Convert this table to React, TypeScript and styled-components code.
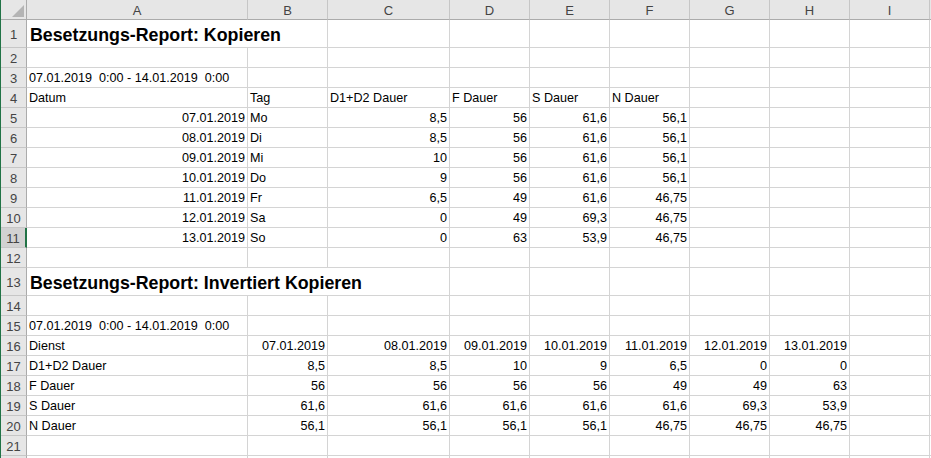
import { FC } from 'react'
import styled, { createGlobalStyle } from 'styled-components'

const GlobalStyle = createGlobalStyle`
  body {
    margin: 0;
    background: #fff;
    overflow: hidden;
  }
`

const COL_WIDTHS = [221, 80, 122, 80, 80, 80, 80, 80, 80]
const LETTERS = ['A', 'B', 'C', 'D', 'E', 'F', 'G', 'H', 'I']
const GRID = '#d4d4d4'
const EXCEL_GREEN = '#217346'

type CellData = { text?: string; right?: boolean; span?: number }
type RowData = { tall?: boolean; title?: boolean; hideNumber?: boolean; cells: CellData[] }

const Sheet = styled.div`
  display: grid;
  grid-template-columns: 26px ${COL_WIDTHS.map((w) => `${w}px`).join(' ')} 1fr;
  grid-auto-rows: 20px;
  width: 931px;
  height: 458px;
  overflow: hidden;
  border-left: 1px solid ${EXCEL_GREEN};
  box-sizing: border-box;
  font-family: 'Liberation Sans', Arial, sans-serif;
`

const HeaderBase = styled.div`
  box-sizing: border-box;
  background: #e6e6e6;
  color: #444;
  font-size: 13px;
  display: flex;
  align-items: center;
  justify-content: center;
`

const Corner = styled(HeaderBase)`
  border-right: 1px solid #ababab;
  border-bottom: 1px solid #ababab;
  align-items: flex-end;
  justify-content: flex-end;
  padding: 0 2px 2px 0;
`

const ColHead = styled(HeaderBase)`
  border-right: 1px solid #c6c6c6;
  border-bottom: 1px solid #ababab;
  padding-top: 1px;
`

const HeadEdge = styled(HeaderBase)`
  border-bottom: 1px solid #ababab;
`

const RowHead = styled(HeaderBase)<{ $active?: boolean; $tall?: boolean }>`
  height: ${(p) => (p.$tall ? 28 : 20)}px;
  border-bottom: 1px solid #c6c6c6;
  border-right: ${(p) => (p.$active ? `2px solid ${EXCEL_GREEN}` : '1px solid #ababab')};
  background: ${(p) => (p.$active ? '#d2d2d2' : '#e6e6e6')};
  padding-top: 1px;
`

const Cell = styled.div<{ $right?: boolean; $title?: boolean; $span?: number }>`
  box-sizing: border-box;
  grid-column: span ${(p) => p.$span ?? 1};
  border-right: 1px solid ${GRID};
  border-bottom: 1px solid ${GRID};
  display: flex;
  align-items: flex-end;
  justify-content: ${(p) => (p.$right ? 'flex-end' : 'flex-start')};
  padding: ${(p) => (p.$title ? '0 2px 2px 3px' : '0 2px 1px 2px')};
  white-space: pre;
  color: #000;
  font-size: ${(p) => (p.$title ? '17.8px' : '12.6px')};
  font-weight: ${(p) => (p.$title ? 700 : 400)};
  line-height: ${(p) => (p.$title ? '20px' : '15px')};
`

const EdgeCell = styled.div`
  border-bottom: 1px solid ${GRID};
`

const RANGE = '07.01.2019  0:00 - 14.01.2019  0:00'

const left = (text: string): CellData => ({ text })
const right = (text: string): CellData => ({ text, right: true })

const weekRows: string[][] = [
  ['07.01.2019', 'Mo', '8,5', '56', '61,6', '56,1'],
  ['08.01.2019', 'Di', '8,5', '56', '61,6', '56,1'],
  ['09.01.2019', 'Mi', '10', '56', '61,6', '56,1'],
  ['10.01.2019', 'Do', '9', '56', '61,6', '56,1'],
  ['11.01.2019', 'Fr', '6,5', '49', '61,6', '46,75'],
  ['12.01.2019', 'Sa', '0', '49', '69,3', '46,75'],
  ['13.01.2019', 'So', '0', '63', '53,9', '46,75'],
]

const inverted: [string, string[]][] = [
  ['D1+D2 Dauer', ['8,5', '8,5', '10', '9', '6,5', '0', '0']],
  ['F Dauer', ['56', '56', '56', '56', '49', '49', '63']],
  ['S Dauer', ['61,6', '61,6', '61,6', '61,6', '61,6', '69,3', '53,9']],
  ['N Dauer', ['56,1', '56,1', '56,1', '56,1', '46,75', '46,75', '46,75']],
]

const rows: RowData[] = [
  { tall: true, title: true, cells: [{ text: 'Besetzungs-Report: Kopieren', span: 2 }] },
  { cells: [] },
  { cells: [left(RANGE)] },
  { cells: ['Datum', 'Tag', 'D1+D2 Dauer', 'F Dauer', 'S Dauer', 'N Dauer'].map(left) },
  ...weekRows.map(([date, day, ...nums]) => ({
    cells: [right(date), left(day), ...nums.map(right)],
  })),
  { cells: [] },
  { tall: true, title: true, cells: [{ text: 'Besetzungs-Report: Invertiert Kopieren', span: 3 }] },
  { cells: [] },
  { cells: [left(RANGE)] },
  { cells: [left('Dienst'), ...weekRows.map((r) => right(r[0]))] },
  ...inverted.map(([label, nums]) => ({ cells: [left(label), ...nums.map(right)] })),
  { cells: [] },
  // only a sliver of row 22 is visible at the bottom edge
  { cells: [], hideNumber: true },
]

const CornerTriangle: FC = () => (
  <svg width="12" height="12" viewBox="0 0 12 12">
    <polygon points="12,0 12,12 0,12" fill="#b4b4b4" />
  </svg>
)

const fillRow = (cells: CellData[]): CellData[] => {
  const used = cells.reduce((n, c) => n + (c.span ?? 1), 0)
  return [...cells, ...Array.from({ length: LETTERS.length - used }, () => ({}))]
}

const Row: FC<{ index: number; row: RowData }> = ({ index, row }) => (
  <>
    <RowHead $active={index === 11} $tall={row.tall}>
      {row.hideNumber ? null : index}
    </RowHead>
    {fillRow(row.cells).map((c, j) => (
      <Cell key={j} $right={c.right} $title={row.title} $span={c.span}>
        {c.text}
      </Cell>
    ))}
    <EdgeCell />
  </>
)

const App: FC = () => {
  const template = ['20px', ...rows.map((r) => (r.tall ? '28px' : '20px'))].join(' ')
  return (
    <>
      <GlobalStyle />
      <Sheet style={{ gridTemplateRows: template }}>
        <Corner>
          <CornerTriangle />
        </Corner>
        {LETTERS.map((l) => (
          <ColHead key={l}>{l}</ColHead>
        ))}
        <HeadEdge />
        {rows.map((row, i) => (
          <Row key={i} index={i + 1} row={row} />
        ))}
      </Sheet>
    </>
  )
}

export default App
